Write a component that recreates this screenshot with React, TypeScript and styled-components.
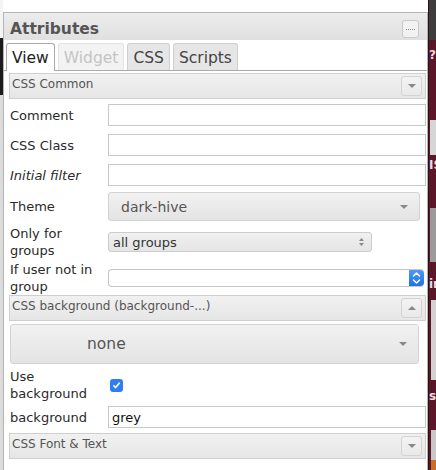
import React from "react";
import styled, { createGlobalStyle } from "styled-components";

const GlobalStyle = createGlobalStyle`
  html, body {
    margin: 0;
    padding: 0;
    background: #ffffff;
  }
  body {
    font-family: "DejaVu Sans", Verdana, sans-serif;
    overflow: hidden;
  }
`;

const Page = styled.div`
  display: flex;
  width: 436px;
  height: 470px;
  overflow: hidden;
`;

const LeftStrip = styled.div`
  width: 3px;
  display: flex;
  flex-direction: column;
  flex-shrink: 0;
`;

const StripPiece = styled.div<{ $h: number; $bg: string }>`
  height: ${(p) => p.$h}px;
  background: ${(p) => p.$bg};
  flex-shrink: 0;
`;

const MainColumn = styled.div`
  width: 425px;
  display: flex;
  flex-direction: column;
  flex-shrink: 0;
`;

const TopGap = styled.div`
  height: 12px;
  background: #fff;
`;

const Panel = styled.div`
  flex: 1;
  border: 1px solid #b4b4b4;
  border-bottom: none;
  background: #fff;
  display: flex;
  flex-direction: column;
`;

const TitleBar = styled.div`
  height: 27px;
  display: flex;
  align-items: center;
  justify-content: space-between;
  padding: 0 8px 0 6px;
  background: linear-gradient(#ececec, #e0e0e0);
`;

const Title = styled.span`
  font-size: 15.5px;
  font-weight: bold;
  color: #555;
  margin-top: 4px;
`;

const TitleButton = styled.div`
  width: 15px;
  height: 16px;
  border: 1px solid #c9c9c9;
  border-radius: 3px;
  background: #f2f2f2;
  display: flex;
  align-items: center;
  justify-content: center;
  margin-top: 5px;
`;

const Dots = styled.span`
  width: 9px;
  height: 1px;
  background-image: linear-gradient(90deg, #888 50%, transparent 50%);
  background-size: 2px 1px;
`;

const TabBar = styled.div`
  display: flex;
  gap: 3px;
  padding: 3px 2px 0 2px;
  border-bottom: 1px solid #aaa;
`;

const Tab = styled.div<{ $active?: boolean; $disabled?: boolean }>`
  padding: 1px 5px 0;
  display: flex;
  align-items: center;
  box-sizing: border-box;
  font-size: 15.5px;
  border: 1px solid ${(p) => (p.$active ? "#aaa" : p.$disabled ? "#e4e4e4" : "#d0d0d0")};
  border-bottom: none;
  border-radius: 3px 3px 0 0;
  margin-bottom: ${(p) => (p.$active ? "-1px" : "0")};
  height: ${(p) => (p.$active ? "28px" : "27px")};
  background: ${(p) => (p.$active ? "#fff" : p.$disabled ? "#f3f3f3" : "#e6e6e6")};
  color: ${(p) => (p.$active ? "#222" : p.$disabled ? "#c4c4c4" : "#444")};
`;

const Content = styled.div`
  display: flex;
  flex-direction: column;
  padding: 2px 1px 0 5px;
`;

const SectionHeader = styled.div`
  height: 24px;
  border: 1px solid #cfcfcf;
  background: linear-gradient(#f1f1f1, #e6e6e6);
  display: flex;
  justify-content: space-between;
  align-items: flex-start;
  padding: 0 3px 0 2px;
`;

const SectionTitle = styled.span`
  font-size: 12px;
  color: #555;
  margin-top: 3px;
`;

const SectionButton = styled.div`
  width: 19px;
  height: 18px;
  margin-top: 2px;
  border: 1px solid #d3d3d3;
  border-radius: 3px;
  background: linear-gradient(#f3f3f3, #e9e9e9);
  display: flex;
  align-items: center;
  justify-content: center;
`;

const Caret = styled.span<{ $up?: boolean }>`
  width: 0;
  height: 0;
  border-left: 4px solid transparent;
  border-right: 4px solid transparent;
  ${(p) => (p.$up ? "border-bottom: 4px solid #888;" : "border-top: 4px solid #888;")}
`;

const Row = styled.div<{ $top?: number; $bottom?: number }>`
  display: flex;
  align-items: center;
  padding-top: ${(p) => p.$top ?? 4}px;
  padding-bottom: ${(p) => p.$bottom ?? p.$top ?? 4}px;
`;

const Label = styled.div<{ $italic?: boolean }>`
  width: 99px;
  flex-shrink: 0;
  padding-left: 1px;
  box-sizing: border-box;
  font-size: 13px;
  line-height: 17px;
  color: #2a2a2a;
  font-style: ${(p) => (p.$italic ? "italic" : "normal")};
`;

const TextInput = styled.div`
  flex: 1;
  height: 22px;
  box-sizing: border-box;
  border: 1px solid #c8c8c8;
  background: #fff;
  font-size: 13px;
  color: #111;
  display: flex;
  align-items: center;
  padding-left: 3px;
`;

const UiSelect = styled.div<{ $size: number; $tall: number }>`
  flex: 1;
  margin-right: ${(p) => p.$size}px;
  height: ${(p) => p.$tall}px;
  box-sizing: border-box;
  border: 1px solid #d3d3d3;
  border-radius: 3px;
  background: linear-gradient(#f1f1f1, #e4e4e4);
  display: flex;
  align-items: center;
  justify-content: space-between;
  padding: 0 11px 0 12px;
  color: #555;
`;

const UiSelectText = styled.span<{ $fs: number; $indent?: number }>`
  font-size: ${(p) => p.$fs}px;
  padding-left: ${(p) => p.$indent ?? 0}px;
`;

const NativeSelect = styled.div`
  width: 264px;
  height: 20px;
  box-sizing: border-box;
  border: 1px solid #cdcdcd;
  border-radius: 3px;
  background: linear-gradient(#f0f0f0, #e5e5e5);
  display: flex;
  align-items: center;
  justify-content: space-between;
  padding: 0 6px 0 4px;
  font-size: 13px;
  color: #333;
`;

const BlueSelect = styled.div`
  flex: 1;
  margin-right: 2px;
  height: 18px;
  box-sizing: border-box;
  border: 1px solid #c6c6c6;
  border-right: none;
  border-radius: 4px;
  background: #fff;
  display: flex;
  justify-content: flex-end;
  overflow: hidden;
`;

const BlueButton = styled.div`
  width: 15px;
  height: 18px;
  margin-top: -1px;
  background: linear-gradient(#4d9bf8, #1f6fe8);
  border-radius: 0 4px 4px 0;
  display: flex;
  align-items: center;
  justify-content: center;
`;

const BigSelectWrap = styled.div`
  display: flex;
  padding: 3px 7px 2px 1px;
`;

const Checkbox = styled.div`
  width: 13px;
  height: 13px;
  margin-left: 2px;
  border-radius: 3px;
  background: #2f7df6;
  display: flex;
  align-items: center;
  justify-content: center;
`;

const RightStrip = styled.div`
  width: 8px;
  flex-shrink: 0;
  background: #5b1729;
  border-left: 1px solid #2a1015;
  box-sizing: border-box;
  display: flex;
  flex-direction: column;
  overflow: hidden;
`;

const StripBlock = styled.div<{ $h: number; $bg: string; $inset?: number }>`
  height: ${(p) => p.$h}px;
  flex-shrink: 0;
  margin-left: ${(p) => p.$inset ?? 0}px;
  background: ${(p) => p.$bg};
`;

const StripText = styled.div<{ $h: number }>`
  height: ${(p) => p.$h}px;
  flex-shrink: 0;
  display: flex;
  align-items: center;
  font-family: "DejaVu Sans", sans-serif;
  font-weight: bold;
  font-size: 12px;
  color: #e6dfe1;
  white-space: nowrap;
`;

const UpDown = ({ color }: { color: string }) => (
  <svg width="7" height="10" viewBox="0 0 7 10">
    <path d="M3.5 1 L6 4 H1 Z M3.5 9 L6 6 H1 Z" fill={color} />
  </svg>
);

const Chevrons = () => (
  <svg width="9" height="14" viewBox="0 0 9 14">
    <path
      d="M1.5 5 L4.5 2 L7.5 5 M1.5 9 L4.5 12 L7.5 9"
      stroke="#fff"
      strokeWidth="1.5"
      fill="none"
      strokeLinecap="round"
      strokeLinejoin="round"
    />
  </svg>
);

const Check = () => (
  <svg width="9" height="9" viewBox="0 0 9 9">
    <path d="M1.8 4.8 L3.6 6.6 L7.2 2.2" stroke="#fff" strokeWidth="1.6" fill="none" strokeLinecap="round" strokeLinejoin="round" />
  </svg>
);

function Section({ title, open }: { title: string; open?: boolean }) {
  return (
    <SectionHeader>
      <SectionTitle>{title}</SectionTitle>
      <SectionButton>
        <Caret $up={open} />
      </SectionButton>
    </SectionHeader>
  );
}

export default function App() {
  return (
    <Page>
      <GlobalStyle />
      <LeftStrip>
        <StripPiece $h={38} $bg="#f4f4f4" />
        <StripPiece $h={57} $bg="#1c1c1c" />
        <StripPiece $h={375} $bg="#dcdcdc" />
      </LeftStrip>

      <MainColumn>
        <TopGap />
        <Panel>
          <TitleBar>
            <Title>Attributes</Title>
            <TitleButton>
              <Dots />
            </TitleButton>
          </TitleBar>

          <TabBar>
            <Tab $active>View</Tab>
            <Tab $disabled>Widget</Tab>
            <Tab>CSS</Tab>
            <Tab>Scripts</Tab>
          </TabBar>

          <Content>
            <Section title="CSS Common" />

            <Row $top={5} $bottom={4}>
              <Label>Comment</Label>
              <TextInput />
            </Row>
            <Row>
              <Label>CSS Class</Label>
              <TextInput />
            </Row>
            <Row>
              <Label $italic>Initial filter</Label>
              <TextInput />
            </Row>
            <Row $top={2}>
              <Label>Theme</Label>
              <UiSelect $size={6} $tall={29}>
                <UiSelectText $fs={14}>dark-hive</UiSelectText>
                <Caret />
              </UiSelect>
            </Row>
            <Row $top={2}>
              <Label>
                Only for
                <br />
                groups
              </Label>
              <NativeSelect>
                <span>all groups</span>
                <UpDown color="#888" />
              </NativeSelect>
            </Row>
            <Row $top={0}>
              <Label>
                If user not in
                <br />
                group
              </Label>
              <BlueSelect>
                <BlueButton>
                  <Chevrons />
                </BlueButton>
              </BlueSelect>
            </Row>

            <Section title="CSS background (background-...)" open />

            <BigSelectWrap>
              <UiSelect $size={0} $tall={40}>
                <UiSelectText $fs={15.5} $indent={64}>
                  none
                </UiSelectText>
                <Caret />
              </UiSelect>
            </BigSelectWrap>

            <Row $top={2} $bottom={2}>
              <Label>
                Use
                <br />
                background
              </Label>
              <Checkbox>
                <Check />
              </Checkbox>
            </Row>
            <Row $top={2} $bottom={5}>
              <Label>background</Label>
              <TextInput>grey</TextInput>
            </Row>

            <Section title="CSS Font &amp; Text" />
          </Content>
        </Panel>
      </MainColumn>

      <RightStrip>
        <StripBlock $h={40} $bg="#3e3c3d" />
        <StripText $h={30}>?¯</StripText>
        <StripBlock $h={50} $bg="transparent" />
        <StripBlock $h={35} $bg="#d6d6d6" $inset={1} />
        <StripText $h={20}>IS</StripText>
        <StripBlock $h={33} $bg="transparent" />
        <StripBlock $h={54} $bg="#9c9a9b" $inset={1} />
        <StripBlock $h={12} $bg="transparent" />
        <StripText $h={20}>in</StripText>
        <StripBlock $h={6} $bg="transparent" />
        <StripBlock $h={80} $bg="#d2d2d2" $inset={2} />
        <StripBlock $h={6} $bg="transparent" />
        <StripText $h={20}>st</StripText>
        <StripBlock $h={24} $bg="transparent" />
        <StripBlock $h={30} $bg="#c8c8c8" $inset={2} />
        <StripBlock $h={10} $bg="#c8702a" $inset={2} />
      </RightStrip>
    </Page>
  );
}
